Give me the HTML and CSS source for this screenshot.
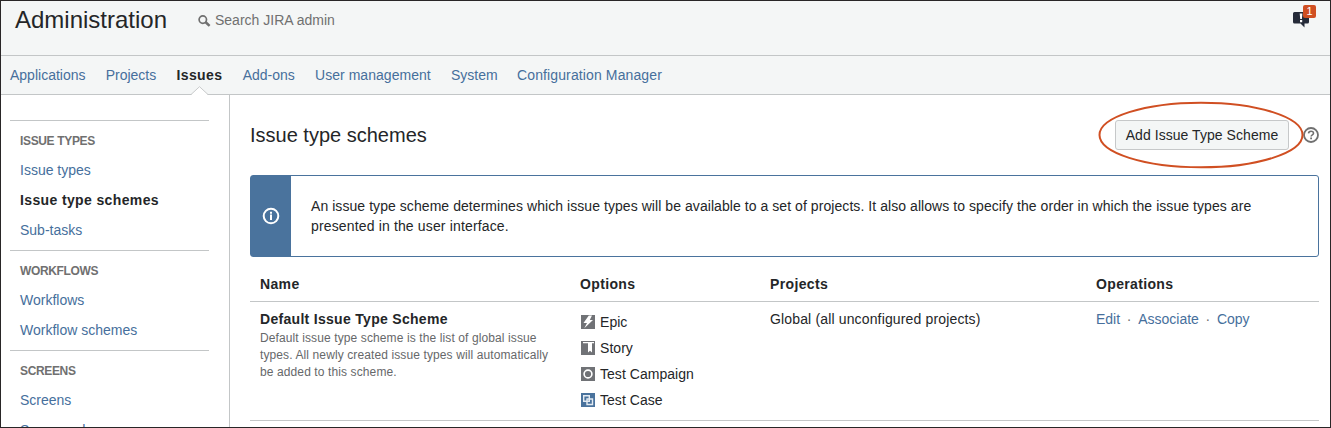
FILE: index.html
```html
<!DOCTYPE html>
<html lang="en">
<head>
<meta charset="utf-8">
<title>Issue type schemes - Administration</title>
<link rel="stylesheet" href="styles.css">
</head>
<body>
<div class="page">
  <header class="header">
    <h1 class="title">Administration</h1>
    <div class="search">
      <svg class="search-icon" width="13" height="12" viewBox="0 0 13 12"><circle cx="4.8" cy="4.6" r="3.7" fill="none" stroke="#707070" stroke-width="1.700"/><path d="M7.400 7L11.600 10.900" stroke="#707070" stroke-width="2.500"/></svg>
      <span>Search JIRA admin</span>
    </div>
    <div class="feedback">
      <svg width="16" height="16" viewBox="0 0 16 16"><path d="M1.500 0H14.500Q16 0 16 1.500V10Q16 11.500 14.500 11.500H11.500V15.500L7.500 11.500H1.500Q0 11.500 0 10V1.500Q0 0 1.500 0Z" fill="#252b39"/><path d="M6.700 1.500H9.400L8.900 7H7.200ZM7 8H9.200V10.200H7Z" fill="#fff"/></svg>
      <span class="badge">1</span>
    </div>
  </header>
  <nav class="nav">
    <a>Applications</a><a>Projects</a><a class="current">Issues<svg class="notch" width="17" height="9" viewBox="0 0 17 9"><path d="M0 9L8.500 0.700L17 9Z" fill="#fff"/><path d="M0 8.500L8.500 0.700L17 8.500" fill="none" stroke="#c8cacb"/></svg></a><a>Add-ons</a><a class="users">User management</a><a>System</a><a class="manager">Configuration Manager</a>
  </nav>
  <div class="body">
    <aside class="sidebar">
      <section class="group"><h2 class="group-title">ISSUE TYPES</h2><a>Issue types</a><a class="selected">Issue type schemes</a><a>Sub-tasks</a></section>
      <section class="group"><h2 class="group-title">WORKFLOWS</h2><a>Workflows</a><a>Workflow schemes</a></section>
      <section class="group"><h2 class="group-title">SCREENS</h2><a>Screens</a><a>Screen schemes</a></section>
    </aside>
    <main class="main">
      <div class="heading">
        <h2 class="heading-title">Issue type schemes</h2>
        <div class="action">
          <button class="button">Add Issue Type Scheme</button>
          <svg class="ring" width="206" height="68" viewBox="0 0 206 68"><ellipse cx="103" cy="34" rx="101.500" ry="32.300" fill="none" stroke="#d04f22" stroke-width="2"/></svg>
        </div>
        <svg class="help" width="16" height="16" viewBox="0 0 16 16"><circle cx="8" cy="8" r="7" fill="none" stroke="#707070" stroke-width="1.800"/><path d="M5.500 6.400C5.600 3.500 10.500 3.500 10.500 6.200C10.500 7.900 8.100 7.800 8.100 9.600" fill="none" stroke="#707070" stroke-width="1.600"/><path d="M7.200 10.600H9V12.300H7.200Z" fill="#707070"/></svg>
      </div>
      <div class="info">
        <div class="info-side"><svg width="18" height="18" viewBox="0 0 18 18"><circle cx="9" cy="9" r="7.300" fill="none" stroke="#fff" stroke-width="2"/><path d="M8 4.700H10V6.700H8ZM8 7.600H10V13H8Z" fill="#fff"/></svg></div>
        <p class="info-text">An issue type scheme determines which issue types will be available to a set of projects. It also allows to specify the order in which the issue types are<br><span class="info-end">presented in the user interface.</span></p>
      </div>
      <div class="row row-head"><span>Name</span><span>Options</span><span>Projects</span><span>Operations</span></div>
      <div class="row row-item">
        <div><strong class="name">Default Issue Type Scheme</strong><p class="description">Default issue type scheme is the list of global issue<br>types. All newly created issue types will automatically<br>be added to this scheme.</p></div>
        <ul class="options">
          <li><svg width="14" height="14" viewBox="0 0 14 14"><path d="M0 0H14V14H0Z" fill="#707276"/><path d="M7.800 0.500H11L8.800 5H12L3.300 13.300L6 8H2.500Z" fill="#fff"/></svg>Epic</li>
          <li><svg width="14" height="14" viewBox="0 0 14 14"><path d="M0 0H14V14H0Z" fill="#707276"/><path d="M2 1H13V2.200H11V11.500L9 9.700L7 11.500V2.200H2Z" fill="#fff"/></svg>Story</li>
          <li><svg width="14" height="14" viewBox="0 0 14 14"><path d="M0 0H14V14H0Z" fill="#707276"/><circle cx="7" cy="7" r="3.900" fill="none" stroke="#fff" stroke-width="1.600"/></svg>Test Campaign</li>
          <li><svg width="14" height="14" viewBox="0 0 14 14"><path d="M0 0H14V14H0Z" fill="#4a739d"/><path d="M2.700 2.700H8.300V8.300H2.700ZM6 6H11.500V11.500H6Z" fill="none" stroke="#e4ebf2" stroke-width="1.400"/></svg>Test Case</li>
        </ul>
        <span class="project">Global (all unconfigured projects)</span>
        <div class="operations"><a>Edit</a><span>·</span><a>Associate</a><span>·</span><a>Copy</a></div>
      </div>
    </main>
  </div>
</div>
</body>
</html>
```
FILE: styles.css
```css
* { box-sizing: border-box; }
body { margin: 0; font: 14px/20px "Liberation Sans", Arial, sans-serif; color: #242628; background: #fff; }
h1, h2, p, ul { margin: 0; padding: 0; font-weight: normal; }
svg { display: block; flex: none; }
a { color: #466f9c; white-space: nowrap; }
.page { width: 1331px; height: 428px; border: 1px solid #292627; overflow: hidden; display: flex; flex-direction: column; }
.header { height: 55px; flex: none; background: #f4f6f6; border-bottom: 1px solid #c3c6c7; display: flex; align-items: flex-start; padding: 0 21px 0 14px; }
.title { font-size: 24px; line-height: 28px; padding-top: 5px; width: 183px; }
.search { display: flex; align-items: center; gap: 4px; padding-top: 9px; color: #707070; }
.search-icon { margin-top: 1px; }
.feedback { margin: 11px 0 0 auto; position: relative; }
.badge { position: absolute; left: 10px; top: -7px; width: 13px; height: 13px; border-radius: 2px; background: #d04f22; color: #fff; font-size: 11px; line-height: 13px; text-align: center; }
.nav { height: 39px; flex: none; background: #f4f6f6; border-bottom: 1px solid #c3c6c7; display: flex; gap: 20.2px; padding: 9px 9px 0; }
.nav .current { position: relative; color: #242628; font-weight: bold; letter-spacing: 0.4px; }
.users { letter-spacing: 0.04px; }
.manager { letter-spacing: 0.12px; margin-left: -0.8px; }
.notch { position: absolute; left: 15px; top: 21px; }
.body { flex: 1; min-height: 0; display: flex; }
.sidebar { width: 229px; flex: none; border-right: 1px solid #c3c6c7; padding: 25px 20px 0 9px; overflow: hidden; }
.group { border-top: 1px solid #c3c6c7; padding: 5px 10px; display: flex; flex-direction: column; }
.group-title { font-size: 12px; line-height: 28px; padding-top: 1px; font-weight: bold; color: #707070; letter-spacing: -0.35px; }
.group a { line-height: 30px; }
.group .selected { color: #242628; font-weight: bold; letter-spacing: 0.37px; }
.main { flex: 1; padding: 25px 11px 0 20px; }
.heading { display: flex; align-items: center; height: 30px; }
.heading-title { font-size: 20px; line-height: 30px; margin-right: auto; }
.action { position: relative; margin-right: 14px; }
.button { display: block; width: 174px; height: 30px; padding: 0; border: 1px solid #c6c8c9; border-radius: 3px; background: #f4f6f6; font: inherit; color: inherit; letter-spacing: 0.05px; white-space: nowrap; }
.ring { position: absolute; left: -17px; top: -19px; }
.info { height: 82px; margin-top: 25px; border: 1px solid #4a739d; border-radius: 3px; display: flex; }
.info-side { width: 40px; background: #4a739d; display: flex; align-items: center; justify-content: center; }
.info-text { padding: 20px 0 0 20px; white-space: nowrap; letter-spacing: 0.062px; }
.info-end { letter-spacing: 0.15px; }
.row { display: grid; grid-template-columns: 320px 190px 326px 1fr; padding-left: 10px; border-bottom: 1px solid #c3c6c7; }
.row-head { height: 45px; padding-top: 17px; font-weight: bold; letter-spacing: 0.35px; }
.row-item { height: 119px; padding-top: 7px; }
.name { display: block; letter-spacing: 0.3px; }
.description { font-size: 12px; line-height: 17px; color: #66686a; margin-top: 1px; white-space: nowrap; letter-spacing: 0.11px; }
.options { list-style: none; padding-top: 3px; display: grid; grid-auto-rows: 26px; align-content: start; }
.options li { display: flex; align-items: center; align-self: start; gap: 5px; padding-left: 1px; letter-spacing: 0.04px; }
.project { letter-spacing: 0.15px; }
.operations { display: flex; gap: 6.7px; }
.operations span { color: #707070; }
```
